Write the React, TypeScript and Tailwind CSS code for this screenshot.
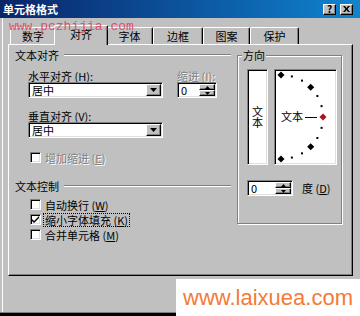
import { FC, ReactNode } from 'react'
import clsx from 'clsx'

const tabs = [
  { label: '数字', w: 'w-[46px]' },
  { label: '对齐', w: 'w-[54px]', active: true },
  { label: '字体', w: 'w-[47px]' },
  { label: '边框', w: 'w-[50px]' },
  { label: '图案', w: 'w-[47px]' },
  { label: '保护', w: 'w-[49px]' },
]

// sunken white field, win9x style
const sunken =
  'bg-white border border-t-[#808080] border-l-[#808080] border-b-white border-r-white shadow-[inset_1px_1px_0_#000,inset_-1px_-1px_0_#dfdfdf]'
const raised =
  'bg-[#c0c0c0] border border-t-white border-l-white border-b-black border-r-black shadow-[inset_-1px_-1px_0_#808080]'
const disabledText = 'text-[#808080] [text-shadow:1px_1px_0_#fff]'

const Tab: FC<{ label: string; w: string; active?: boolean }> = ({ label, w, active }) => (
  <div
    className={clsx(
      w,
      'flex items-center justify-center bg-[#c0c0c0] rounded-t-[2px]',
      'border-l border-t border-white border-r border-r-black shadow-[inset_-1px_0_0_#808080]',
      active ? 'relative z-10 -mx-[2px] h-[20px] -mb-px pb-[3px]' : 'h-[17px] pt-[1px]'
    )}
  >
    {label}
  </div>
)

const SectionTitle: FC<{ children: ReactNode; className?: string }> = ({ children, className }) => (
  <div className={clsx('flex items-center h-[12px]', className)}>
    <span>{children}</span>
    <div className="flex-1 ml-[5px] h-[2px] border-t border-[#808080] border-b border-b-white" />
  </div>
)

const Select: FC<{ value: string }> = ({ value }) => (
  <div className={clsx(sunken, 'h-[16px] flex items-center justify-between pl-[3px] pr-px')}>
    <span>{value}</span>
    <div className={clsx(raised, 'w-[15px] h-[12px] flex items-center justify-center')}>
      <svg width="7" height="4" viewBox="0 0 7 4">
        <path d="M0 0h7L3.5 4z" fill="#000" />
      </svg>
    </div>
  </div>
)

const Spinner: FC<{ className?: string }> = ({ className }) => (
  <div className={clsx(sunken, 'h-[16px] flex items-center justify-between pl-[3px] pr-px', className)}>
    <span>0</span>
    <div className="flex flex-col w-[16px] h-[12px]">
      <div className={clsx(raised, 'h-[6px] flex items-center justify-center')}>
        <svg width="5" height="3" viewBox="0 0 5 3">
          <path d="M2.5 0L5 3H0z" fill="#000" />
        </svg>
      </div>
      <div className={clsx(raised, 'h-[6px] flex items-center justify-center')}>
        <svg width="5" height="3" viewBox="0 0 5 3">
          <path d="M0 0h5L2.5 3z" fill="#000" />
        </svg>
      </div>
    </div>
  </div>
)

const Checkbox: FC<{ label: ReactNode; checked?: boolean; disabled?: boolean; focused?: boolean }> = ({
  label,
  checked,
  disabled,
  focused,
}) => (
  <div className="flex items-center h-[13px] pl-[15px]">
    <div
      className={clsx(
        sunken,
        'w-[11px] h-[11px] flex items-center justify-center',
        disabled && 'bg-[#c0c0c0]'
      )}
    >
      {checked && (
        <svg width="7" height="7" viewBox="0 0 7 7">
          <path d="M0 3l2 2 5-5v2L2 7 0 5z" fill="#000" />
        </svg>
      )}
    </div>
    <span
      className={clsx(
        'ml-[3px] px-px leading-[12px]',
        disabled && disabledText,
        focused && 'outline outline-1 outline-dotted outline-black'
      )}
    >
      {label}
    </span>
  </div>
)

const Dial: FC = () => {
  const cx = 6
  const cy = 47
  const r = 42
  const points = []
  for (let a = 90; a >= -90; a -= 15) {
    const rad = (a * Math.PI) / 180
    const x = cx + r * Math.cos(rad)
    const y = cy - r * Math.sin(rad)
    if (a === 0) {
      points.push(<rect key={a} x={x - 2.5} y={y - 2.5} width="5" height="5" fill="#b01020" transform={`rotate(45 ${x} ${y})`} />)
    } else if (a % 45 === 0) {
      points.push(<rect key={a} x={x - 2.5} y={y - 2.5} width="5" height="5" fill="#000" transform={`rotate(45 ${x} ${y})`} />)
    } else {
      points.push(<rect key={a} x={x - 1} y={y - 1} width="2" height="2" fill="#000" />)
    }
  }
  return (
    <svg width="61" height="94" viewBox="0 0 61 94">
      <text x="6" y="51" fontSize="11" fontFamily="'Noto Sans CJK SC', sans-serif" fill="#000">
        文本
      </text>
      <line x1="30" y1="47.5" x2="42" y2="47.5" stroke="#000" strokeWidth="1" />
      {points}
    </svg>
  )
}

export default function App() {
  return (
    <div className="w-[360px] h-[316px] bg-[#c0c0c0] relative overflow-hidden flex flex-col text-[11px] text-black font-['Noto_Sans_CJK_SC',sans-serif]">
      {/* title bar */}
      <div className="h-[18px] flex items-center justify-between bg-gradient-to-r from-[#0a246a] to-[#1084d0] pl-[3px] pr-[7px]">
        <span className="text-white font-bold text-[11px] leading-none">单元格格式</span>
        <div className="flex gap-[4px]">
          <div className={clsx(raised, 'w-[13px] h-[11px] flex items-center justify-center text-[10px] font-bold leading-none')}>
            ?
          </div>
          <div className={clsx(raised, 'w-[13px] h-[11px] flex items-center justify-center')}>
            <svg width="7" height="6" viewBox="0 0 7 6">
              <path d="M0 0h2l1.5 2L5 0h2L4.5 3 7 6H5L3.5 4 2 6H0l2.5-3z" fill="#000" />
            </svg>
          </div>
        </div>
      </div>

      {/* body */}
      <div className="ml-[2px] border-l border-white h-[294px] pl-[5px] pr-[7px]">
        <div className="h-[26px] flex items-end pl-[2px]">
          {tabs.map((t) => (
            <Tab key={t.label} {...t} />
          ))}
        </div>

        <div className="h-[232px] flex border-t border-l border-white border-r border-b border-r-black border-b-black shadow-[inset_-1px_-1px_0_#808080] pl-[6px] pt-[4px]">
          {/* left column */}
          <div className="w-[216px] flex flex-col">
            <SectionTitle>文本对齐</SectionTitle>

            <div className="flex pl-[13px] gap-[14px] mt-[9px]">
              <div className="w-[135px] flex flex-col">
                <div className="h-[12px] leading-[12px]">
                  水平对齐 (<u>H</u>):
                </div>
                <Select value="居中" />
                <div className="h-[12px] leading-[12px] mt-[12px]">
                  垂直对齐 (<u>V</u>):
                </div>
                <Select value="居中" />
              </div>
              <div className="w-[40px] flex flex-col">
                <div className={clsx('h-[12px] leading-[12px]', disabledText)}>
                  缩进 (<u>I</u>):
                </div>
                <Spinner />
              </div>
            </div>

            <div className="mt-[13px]">
              <Checkbox
                disabled
                label={
                  <>
                    增加缩进 (<u>E</u>)
                  </>
                }
              />
            </div>

            <SectionTitle className="mt-[16px]">文本控制</SectionTitle>

            <div className="mt-[6px] flex flex-col gap-[2px]">
              <Checkbox
                label={
                  <>
                    自动换行 (<u>W</u>)
                  </>
                }
              />
              <Checkbox
                checked
                focused
                label={
                  <>
                    缩小字体填充 (<u>K</u>)
                  </>
                }
              />
              <Checkbox
                label={
                  <>
                    合并单元格 (<u>M</u>)
                  </>
                }
              />
            </div>
          </div>

          {/* orientation group */}
          <div className="relative ml-[6px] mt-[6px] w-[105px] h-[169px] border border-[#808080] shadow-[inset_1px_1px_0_#fff,1px_1px_0_#fff] pl-[9px] pt-[13px]">
            <span className="absolute -top-[7px] left-[4px] px-px bg-[#c0c0c0] leading-[12px]">方向</span>
            <div className="flex gap-[6px]">
              <div className={clsx(sunken, 'w-[21px] h-[96px] flex flex-col items-center justify-center leading-[11px]')}>
                <span>文</span>
                <span>本</span>
              </div>
              <div className={clsx(sunken, 'w-[63px] h-[96px]')}>
                <Dial />
              </div>
            </div>
            <div className="flex items-center mt-[15px]">
              <Spinner className="w-[46px]" />
              <span className="ml-[9px]">
                度 (<u>D</u>)
              </span>
            </div>
          </div>
        </div>
      </div>

      <div className="h-[4px] border-t border-[#808080] bg-black" />

      {/* watermarks */}
      <span className="absolute z-20 left-[9px] top-[20px] text-[13px] leading-[13px] text-[#e24d6b] font-['Liberation_Mono',monospace]">
        www.pczhijia.com
      </span>
      <div className="absolute z-20 right-0 bottom-0 w-[184px] h-[37px] bg-white flex items-center pl-[7px] text-[22px] text-[#f47a36] font-['Liberation_Sans',sans-serif]">
        www.laixuea.com
      </div>
    </div>
  )
}
